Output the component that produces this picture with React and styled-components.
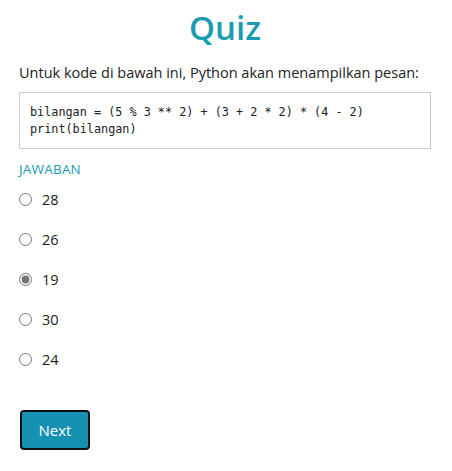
import React from "react"
import styled, { createGlobalStyle } from "styled-components"

const GlobalStyle = createGlobalStyle`
  body {
    margin: 0;
    background: #ffffff;
    font-family: "Open Sans", "Noto Sans", sans-serif;
  }
`

const Page = styled.div`
  padding: 6px 21px 0 19px;
`

const Title = styled.h1`
  margin: 0;
  text-align: center;
  font-size: 33px;
  font-weight: 600;
  line-height: 44px;
  color: #1a9cb1;
`

const Question = styled.p`
  margin: 13px 0 0;
  font-size: 14.5px;
  line-height: 20px;
  color: #222;
`

const CodeBox = styled.pre`
  margin: 9px 0 0;
  padding: 11px 10px 10px;
  border: 1px solid #cccccc;
  font-family: "DejaVu Sans Mono", monospace;
  font-size: 11.8px;
  line-height: 17px;
  color: #222;
`

const Label = styled.div`
  margin-top: 10px;
  font-size: 13.5px;
  line-height: 20px;
  color: #1a9cb1;
  letter-spacing: 0.2px;
`

const Options = styled.div`
  display: flex;
  flex-direction: column;
`

const Option = styled.label`
  display: flex;
  align-items: center;
  gap: 10px;
  height: 40px;
  font-size: 14.5px;
  color: #222;
`

const Radio = styled.input`
  margin: 0;
  width: 13px;
  height: 13px;
  accent-color: #767676;
`

const NextButton = styled.button`
  margin-top: 31px;
  margin-left: 1px;
  width: 70px;
  height: 40px;
  background: #1591b1;
  color: #ffffff;
  border: 2px solid #111;
  border-radius: 4px;
  font-family: "Open Sans", "Noto Sans", sans-serif;
  font-size: 15px;
`

const answers = ["28", "26", "19", "30", "24"]

export default function App() {
  return (
    <Page>
      <GlobalStyle />
      <Title>Quiz</Title>
      <Question>Untuk kode di bawah ini, Python akan menampilkan pesan:</Question>
      <CodeBox>
        {"bilangan = (5 % 3 ** 2) + (3 + 2 * 2) * (4 - 2)\nprint(bilangan)"}
      </CodeBox>
      <Label>JAWABAN</Label>
      <Options>
        {answers.map((a) => (
          <Option key={a}>
            <Radio type="radio" name="answer" defaultChecked={a === "19"} />
            {a}
          </Option>
        ))}
      </Options>
      <NextButton>Next</NextButton>
    </Page>
  )
}
